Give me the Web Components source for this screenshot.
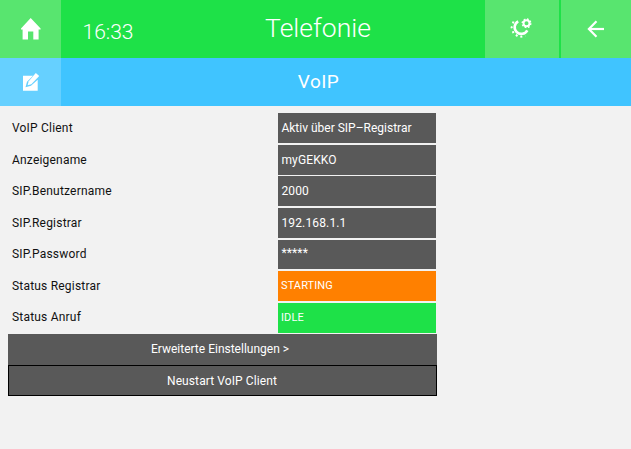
<!DOCTYPE html>
<html lang="de">
<head>
<meta charset="utf-8">
<title>VoIP</title>
<style>
html,body{margin:0;padding:0;height:100%;background:#f2f2f2}
body{font-family:Roboto,"Liberation Sans",sans-serif;overflow:hidden}
</style>
</head>
<body>
<voip-screen>
  <app-header slot="header" title-text="Telefonie" time="16:33"></app-header>
  <sub-header slot="sub" title-text="VoIP"></sub-header>
  <form-row label="VoIP Client" value="Aktiv über SIP–Registrar" style="--vs:0px"></form-row>
  <form-row label="Anzeigename" value="myGEKKO"></form-row>
  <form-row label="SIP.Benutzername" value="2000"></form-row>
  <form-row label="SIP.Registrar" value="192.168.1.1"></form-row>
  <form-row label="SIP.Password" value="*****" kind="secret" style="--lh:29px"></form-row>
  <form-row label="Status Registrar" value="STARTING" kind="warn"></form-row>
  <form-row label="Status Anruf" value="IDLE" kind="ok" style="--lh:28px"></form-row>
  <action-button slot="actions">Erweiterte Einstellungen &gt;</action-button>
  <action-button slot="actions" outlined>Neustart VoIP Client</action-button>
</voip-screen>
<script>
const ICONS = {
  home:'<svg width="20" height="22" viewBox="0 0 20 22"><path fill="#fff" d="M9.7 0 19.600 10.500V11.500H17.600V21.500H12.300V13.500H7V21.500H1.600V11.500H0V10.500Z"/></svg>',
  edit:'<svg width="18" height="18" viewBox="0 0 18 18"><path fill="#fff" d="M1 3H11L5 9 3.500 14.500 9 13 15.700 7V18H1Z" transform="translate(0 -.3)"/><path fill="#fff" d="M13.800 0 17.200 3 9.300 11.200 5.600 12.300 6.700 8.300Z"/></svg>',
  gear:'<svg width="24" height="24" viewBox="0 0 24 24"><g fill="none" stroke="#fff"><path stroke-width="2.600" d="M8.200 4.300A6.700 6.700 0 1 0 17.300 13.300"/><path stroke-width="2" stroke-dasharray="2 3.100" d="M3.500 4.500 1.600 10.500 3.600 16.500 9 20 15.500 19"/><circle cx="16.500" cy="6.300" r="3" stroke-width="2"/><circle cx="16.500" cy="6.300" r="4.300" stroke-width="1.400" stroke-dasharray="1.700 1.670"/></g></svg>',
  back:'<svg width="18" height="18" viewBox="0 0 18 18"><g fill="none" stroke="#fff" stroke-width="2.200"><path d="M2 9H17"/><path d="M9.500 1.200 1.900 9 9.500 16.800"/></g></svg>'
};
class VoipScreen extends HTMLElement{
  constructor(){super();this.attachShadow({mode:'open'}).innerHTML=`<style>
    :host{display:flex;flex-direction:column;width:631px;height:449px;background:#f2f2f2;color:#1a1a1a;font-family:Roboto,"Liberation Sans",sans-serif}
    .body{display:flex;flex-direction:column;width:429px;margin-left:8px}
    .rows{display:grid;grid-auto-rows:29.6px;row-gap:2.05px;padding-top:7.2px}
    .actions{display:flex;flex-direction:column;padding-top:1.3px}
  </style>
  <slot name="header"></slot><slot name="sub"></slot>
  <div class="body"><div class="rows"><slot></slot></div><div class="actions"><slot name="actions"></slot></div></div>`;}
}
class IconCell extends HTMLElement{
  constructor(){super();this.attachShadow({mode:'open'});}
  connectedCallback(){this.shadowRoot.innerHTML=`<style>
    :host{display:flex;align-items:center;justify-content:center;background:var(--cell,#58e56f);height:100%}
    svg{display:block}
  </style>${ICONS[this.getAttribute('icon')]}`;}
}
class AppHeader extends HTMLElement{
  constructor(){super();this.attachShadow({mode:'open'});}
  connectedCallback(){this.shadowRoot.innerHTML=`<style>
    :host{display:grid;grid-template-columns:61px 90px 1fr 74px 72px;height:58px;background:#1ee148;color:#fff;--cell:#58e56f}
    .time{font-weight:300;font-size:21px;line-height:58px;padding:3px 0 0 21.5px;box-sizing:border-box;height:58px;white-space:nowrap}
    .title{font-weight:300;font-size:26.5px;line-height:56px;text-align:center;white-space:nowrap}
    .last{margin-left:2px}
  </style>
  <icon-cell icon="home"></icon-cell>
  <div class="time">${this.getAttribute('time')}</div>
  <div class="title">${this.getAttribute('title-text')}</div>
  <icon-cell icon="gear"></icon-cell>
  <icon-cell class="last" icon="back"></icon-cell>`;}
}
class SubHeader extends HTMLElement{
  constructor(){super();this.attachShadow({mode:'open'});}
  connectedCallback(){this.shadowRoot.innerHTML=`<style>
    :host{display:grid;grid-template-columns:61px 1fr;height:48px;background:#40c4ff;color:#fff;--cell:#66d0ff}
    .title{font-size:19px;font-weight:400;letter-spacing:.4px;line-height:47px;text-align:center;padding-right:55px;white-space:nowrap}
  </style>
  <icon-cell icon="edit"></icon-cell>
  <div class="title">${this.getAttribute('title-text')}</div>`;}
}
class FormRow extends HTMLElement{
  constructor(){super();this.attachShadow({mode:'open'});}
  connectedCallback(){
    const kind=this.getAttribute('kind')||'';
    this.shadowRoot.innerHTML=`<style>
    :host{display:grid;grid-template-columns:270px 158px;font-size:12px;min-height:0}
    .label{padding-left:4px;line-height:var(--lh,30px);color:#111;white-space:nowrap;letter-spacing:.2px}
    .value{background:#595959;color:#fff;padding-left:3.4px;line-height:30px;white-space:nowrap;overflow:hidden;letter-spacing:var(--vs,.15px)}
    .warn{background:#ff8000;font-size:11px;padding-left:3px;letter-spacing:.1px}
    .ok{background:#1ee148;font-size:11px;padding-left:3px;letter-spacing:.1px}
    .secret{line-height:27px}
  </style>
  <div class="label">${this.getAttribute('label')}</div>
  <div class="value ${kind}">${this.getAttribute('value')}</div>`;}
}
class ActionButton extends HTMLElement{
  constructor(){super();this.attachShadow({mode:'open'}).innerHTML=`<style>
    :host{display:flex;align-items:center;justify-content:center;box-sizing:border-box;height:31px;background:#595959;color:#fff;font-size:12px;white-space:nowrap;padding:0 5px 1px 0}
    :host([outlined]){border:1px solid #000;padding:1px 1px 0 0;letter-spacing:.1px}
  </style><slot></slot>`;}
}
customElements.define('voip-screen',VoipScreen);
customElements.define('icon-cell',IconCell);
customElements.define('app-header',AppHeader);
customElements.define('sub-header',SubHeader);
customElements.define('form-row',FormRow);
customElements.define('action-button',ActionButton);
</script>
</body>
</html>
